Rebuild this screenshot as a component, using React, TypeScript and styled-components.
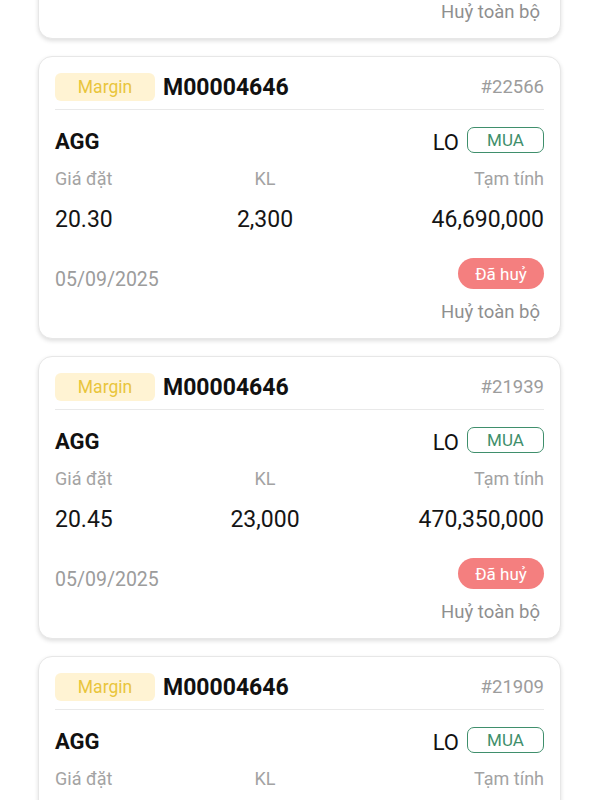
import React from "react";
import styled, { createGlobalStyle } from "styled-components";

const GlobalStyle = createGlobalStyle`
  html, body {
    margin: 0;
    padding: 0;
    background: #ffffff;
    font-family: Roboto, "Noto Sans", "Liberation Sans", sans-serif;
    overflow: hidden;
  }
  * { box-sizing: border-box; }
`;

const Page = styled.div`
  width: 600px;
  height: 800px;
  overflow: hidden;
  background: #ffffff;
`;

const List = styled.div`
  display: flex;
  flex-direction: column;
  gap: 17px;
  padding: 0 39px 0 38px;
  margin-top: -244px;
`;

const Card = styled.div`
  display: flex;
  flex-direction: column;
  background: #ffffff;
  border: 1px solid #e7e7e7;
  border-radius: 14px;
  box-shadow: 0 2px 4px rgba(0, 0, 0, 0.13);
  padding: 15px 16px 15px 16px;
  height: 283px;
`;

const Header = styled.div`
  display: flex;
  align-items: center;
  height: 28px;
  margin-top: 1px;
  margin-bottom: 8px;
`;

const AccountBadge = styled.span`
  display: inline-flex;
  align-items: center;
  justify-content: center;
  width: 100px;
  height: 28px;
  border-radius: 6px;
  background: #fff3d3;
  color: #e9c53c;
  font-size: 17.5px;
`;

const AccountCode = styled.span`
  margin-left: 8px;
  font-size: 23px;
  font-weight: 700;
  color: #111111;
`;

const OrderNo = styled.span`
  margin-left: auto;
  font-size: 18.5px;
  color: #9c9c9c;
`;

const Divider = styled.div`
  height: 1px;
  background: #e9e9e9;
`;

const SymbolRow = styled.div`
  display: flex;
  align-items: center;
  height: 26px;
  margin-top: 17px;
`;

const Symbol = styled.span`
  font-size: 22px;
  font-weight: 700;
  color: #111111;
  padding-top: 3px;
`;

const OrderType = styled.span`
  margin-left: auto;
  font-size: 22px;
  color: #111111;
  padding-top: 4px;
`;

const SideBadge = styled.span<{ $color: string }>`
  display: inline-flex;
  align-items: center;
  justify-content: center;
  margin-left: 8px;
  width: 77px;
  height: 26px;
  border: 1.5px solid ${(p) => p.$color};
  border-radius: 7px;
  color: ${(p) => p.$color};
  font-size: 17px;
`;

const Grid = styled.div<{ $top: number; $size: number; $color: string; $lh: number }>`
  display: grid;
  grid-template-columns: 175px 70px 1fr;
  margin-top: ${(p) => p.$top}px;
  font-size: ${(p) => p.$size}px;
  line-height: ${(p) => p.$lh}px;
  color: ${(p) => p.$color};

  & > span:nth-child(2) {
    text-align: center;
    white-space: nowrap;
  }
  & > span:nth-child(3) {
    text-align: right;
  }
`;

const StatusRow = styled.div`
  display: flex;
  align-items: flex-end;
  justify-content: space-between;
  margin-top: 24px;
`;

const DateText = styled.span`
  font-size: 19.5px;
  line-height: 24px;
  color: #9c9c9c;
  margin-bottom: -3px;
`;

const StatusPill = styled.span`
  display: inline-flex;
  align-items: center;
  justify-content: center;
  width: 86px;
  height: 31px;
  border-radius: 16px;
  background: #f47f7f;
  color: #ffffff;
  font-size: 17px;
`;

const CancelAll = styled.span`
  align-self: flex-end;
  margin-top: 12px;
  margin-right: 4px;
  font-size: 18.5px;
  line-height: 22px;
  color: #8f8f8f;
`;

type Order = {
  id: string;
  account: string;
  symbol: string;
  price: string;
  qty: string;
  total: string;
  date: string;
};

const orders: Order[] = [
  { id: "#22601", account: "M00004646", symbol: "AGG", price: "20.25", qty: "1,000", total: "20,250,000", date: "05/09/2025" },
  { id: "#22566", account: "M00004646", symbol: "AGG", price: "20.30", qty: "2,300", total: "46,690,000", date: "05/09/2025" },
  { id: "#21939", account: "M00004646", symbol: "AGG", price: "20.45", qty: "23,000", total: "470,350,000", date: "05/09/2025" },
  { id: "#21909", account: "M00004646", symbol: "AGG", price: "20.45", qty: "10,000", total: "204,500,000", date: "05/09/2025" },
];

const OrderCard: React.FC<{ o: Order }> = ({ o }) => (
  <Card>
    <Header>
      <AccountBadge>Margin</AccountBadge>
      <AccountCode>{o.account}</AccountCode>
      <OrderNo>{o.id}</OrderNo>
    </Header>
    <Divider />
    <SymbolRow>
      <Symbol>{o.symbol}</Symbol>
      <OrderType>LO</OrderType>
      <SideBadge $color="#3f8f6c">MUA</SideBadge>
    </SymbolRow>
    <Grid $top={15} $size={18} $lh={22} $color="#a3a3a3">
      <span>Giá đặt</span>
      <span>KL</span>
      <span>Tạm tính</span>
    </Grid>
    <Grid $top={16} $size={23} $lh={28} $color="#151515">
      <span>{o.price}</span>
      <span>{o.qty}</span>
      <span>{o.total}</span>
    </Grid>
    <StatusRow>
      <DateText>{o.date}</DateText>
      <StatusPill>Đã huỷ</StatusPill>
    </StatusRow>
    <CancelAll>Huỷ toàn bộ</CancelAll>
  </Card>
);

export default function App() {
  return (
    <Page>
      <GlobalStyle />
      <List>
        {orders.map((o) => (
          <OrderCard key={o.id} o={o} />
        ))}
      </List>
    </Page>
  );
}
